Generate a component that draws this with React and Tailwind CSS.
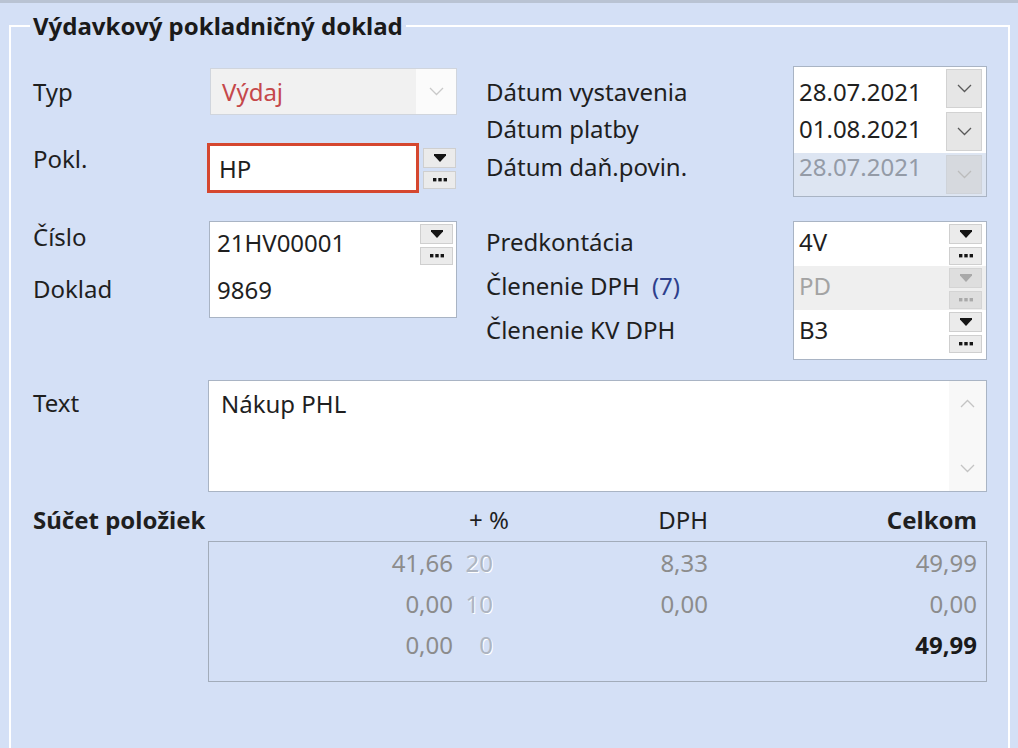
import React from 'react';

const DATES = [
  { label: 'Dátum vystavenia', value: '28.07.2021', shift: 'pt-[6px]' },
  { label: 'Dátum platby', value: '01.08.2021', shift: 'pb-[6px]' },
  { label: 'Dátum daň.povin.', value: '28.07.2021', shift: 'pb-[16px]', disabled: true },
];

const POSTING = [
  { label: 'Predkontácia', value: '4V' },
  { label: 'Členenie DPH', extra: '(7)', value: 'PD', disabled: true },
  { label: 'Členenie KV DPH', value: 'B3' },
];

const TOTALS = [
  { base: '41,66', rate: '20', vat: '8,33', total: '49,99' },
  { base: '0,00', rate: '10', vat: '0,00', total: '0,00' },
  { base: '0,00', rate: '0', vat: '', total: '49,99', bold: true },
];

function Chevron({ up = false }) {
  return (
    <svg width="15" height="9" viewBox="0 0 15 9">
      <path d={up ? 'M1 8 L7.5 1.5 L14 8' : 'M1 1 L7.5 7.5 L14 1'} fill="none" stroke="currentColor" strokeWidth="1.3" />
    </svg>
  );
}

function Triangle() {
  return (
    <svg width="12" height="8" viewBox="0 0 12 8">
      <path d="M0 0 H12 V1.6 L6 8 L0 1.6 Z" fill="currentColor" />
    </svg>
  );
}

function Dots() {
  return (
    <svg width="14" height="4" viewBox="0 0 14 4">
      <rect x="0" y="0" width="3.4" height="3.4" fill="currentColor" />
      <rect x="5.3" y="0" width="3.4" height="3.4" fill="currentColor" />
      <rect x="10.6" y="0" width="3.4" height="3.4" fill="currentColor" />
    </svg>
  );
}

function PickButtons({ disabled = false }) {
  const tone = disabled
    ? 'border-[#d4d4d4] bg-[#dedede] text-[#a9a9a9]'
    : 'border-[#cfcfcf] bg-[#ebebeb] text-[#151515]';
  return (
    <div className="flex w-[33px] flex-col gap-[3px]">
      <div className={`flex h-[20px] items-center justify-center border ${tone}`}>
        <Triangle />
      </div>
      <div className={`flex h-[18px] items-center justify-center border ${tone}`}>
        <Dots />
      </div>
    </div>
  );
}

export default function App() {
  return (
    <div className="h-[748px] w-[1018px] overflow-hidden bg-[#d4e0f6] font-['Noto_Sans',sans-serif] text-[24px] leading-[33px] text-[#1f1f1f]">
      <div className="h-[5px] border-t-[3px] border-[#b9c3d3]" />

      <fieldset className="ml-[9px] mr-[8px] mt-[8px] h-[800px] border-2 border-white pl-[22px] pr-[21px]">
        <legend className="-ml-[3px] px-[3px] text-[24px] font-bold leading-[26px] text-[#1a1a1a]">
          Výdavkový pokladničný doklad
        </legend>

        <div className="mt-[27px] flex items-start">
          {/* left column */}
          <div className="w-[424px] pt-[2px]">
            <div className="flex h-[47px] items-center">
              <span className="w-[177px]">Typ</span>
              <div className="flex h-full w-[247px] border border-[#d0d5dd] bg-[#f1f1f1]">
                <div className="flex flex-1 items-center pl-[11px] text-[#c5484b]">Výdaj</div>
                <div className="flex w-[40px] items-center justify-center bg-[#fbfbfb] text-[#c9c9c9]">
                  <Chevron />
                </div>
              </div>
            </div>

            <div className="mt-[28px] flex h-[50px] items-center">
              <span className="w-[174px] pb-[20px]">Pokl.</span>
              <div className="flex h-full w-[212px] items-center border-[3px] border-[#d5472f] bg-white pl-[9px]">HP</div>
              <div className="ml-[4px]">
                <PickButtons />
              </div>
            </div>

            <div className="mt-[28px] flex">
              <div className="w-[176px]">
                <div className="flex h-[44px] items-center pb-[14px]">Číslo</div>
                <div className="flex h-[44px] items-center pt-[2px]">Doklad</div>
              </div>
              <div className="h-[97px] w-[248px] border border-[#a9b4c4] bg-white">
                <div className="flex h-[45px] items-center pl-[7px] pr-[3px]">
                  <span className="flex-1 pb-[4px]">21HV00001</span>
                  <PickButtons />
                </div>
                <div className="flex h-[44px] items-center pl-[7px]">9869</div>
              </div>
            </div>
          </div>

          {/* right column */}
          <div className="ml-[29px] flex-1">
            <div className="flex">
              <div className="w-[307px] pt-[1px]">
                {DATES.map((d) => (
                  <div key={d.label} className={`flex h-[43px] items-center ${d.shift}`}>{d.label}</div>
                ))}
              </div>
              <div className="w-[194px] border border-[#a9b4c4] bg-white">
                {DATES.map((d) => (
                  <div
                    key={d.label}
                    className={`flex h-[43px] items-center pl-[5px] pr-[4px] ${d.disabled ? 'bg-[#dde5f2] text-[#949ba7]' : ''}`}
                  >
                    <span className={`flex-1 ${d.shift}`}>{d.value}</span>
                    <div
                      className={`flex h-[39px] w-[36px] items-center justify-center border ${
                        d.disabled ? 'border-[#cfd3d9] bg-[#d6d9de] text-[#bcbcbc]' : 'border-[#d2d2d2] bg-[#e6e6e6] text-[#5a5a5a]'
                      }`}
                    >
                      <Chevron />
                    </div>
                  </div>
                ))}
              </div>
            </div>

            <div className="mt-[24px] flex">
              <div className="w-[307px] pt-[1px]">
                {POSTING.map((p) => (
                  <div key={p.label} className="flex h-[44px] items-center pb-[5px]">
                    {p.label}
                    {p.extra && <span className="ml-[12px] text-[#2e3f8c]">{p.extra}</span>}
                  </div>
                ))}
              </div>
              <div className="w-[194px] border border-[#a9b4c4] bg-white pb-[5px]">
                {POSTING.map((p) => (
                  <div
                    key={p.label}
                    className={`flex h-[44px] items-center pl-[5px] pr-[4px] ${p.disabled ? 'bg-[#efefef] text-[#a3a3a3]' : ''}`}
                  >
                    <span className="flex-1 pb-[5px]">{p.value}</span>
                    <PickButtons disabled={p.disabled} />
                  </div>
                ))}
              </div>
            </div>
          </div>
        </div>

        {/* text */}
        <div className="mt-[20px] flex">
          <span className="w-[175px] pt-[6px]">Text</span>
          <div className="flex h-[112px] w-[779px] border border-[#a9b4c4] bg-white">
            <div className="flex-1 pl-[12px] pt-[6px]">Nákup PHL</div>
            <div className="flex w-[37px] flex-col items-center justify-between bg-[#f8f8f8] pb-[18px] pt-[18px] text-[#c4c4c4]">
              <Chevron up />
              <Chevron />
            </div>
          </div>
        </div>

        {/* totals header */}
        <div className="flex h-[49px] pt-[11px]">
          <span className="w-[175px] font-bold">Súčet položiek</span>
          <span className="w-[256px]" />
          <span className="w-[50px] text-center">+ %</span>
          <span className="w-[194px] text-right">DPH</span>
          <span className="w-[269px] text-right font-bold">Celkom</span>
        </div>

        <div className="ml-[175px] h-[141px] w-[779px] border border-[#a2acba] text-[#8c8c8c]">
          {TOTALS.map((r, i) => (
            <div key={i} className="flex h-[41px] items-center">
              <span className="w-[244px] text-right">{r.base}</span>
              <span className="w-[40px] text-right text-[#aeb5c1] [text-shadow:1px_1px_0_#ffffff]">{r.rate}</span>
              <span className="w-[215px] text-right">{r.vat}</span>
              <span className={`w-[269px] text-right ${r.bold ? 'font-bold text-[#1a1a1a]' : ''}`}>{r.total}</span>
            </div>
          ))}
        </div>
      </fieldset>
    </div>
  );
}
